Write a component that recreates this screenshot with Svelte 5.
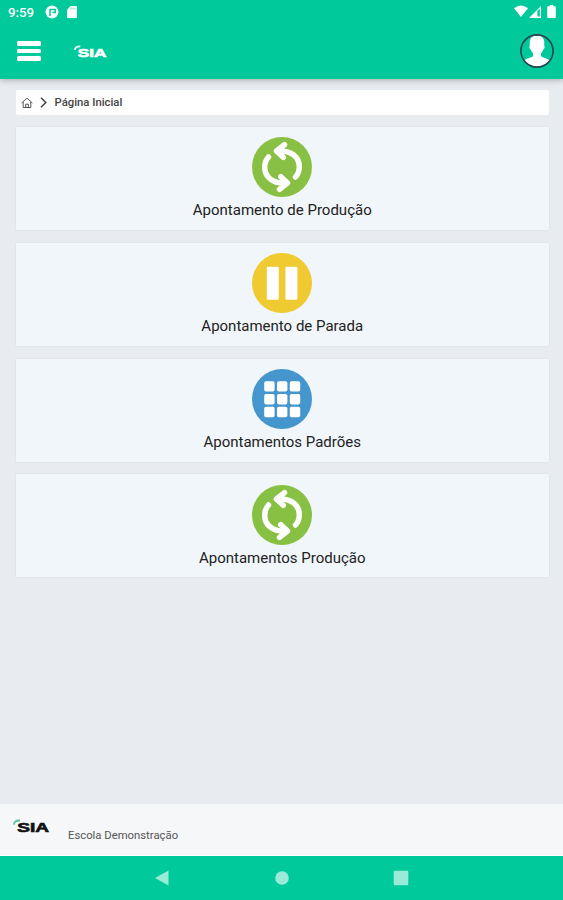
<script lang="ts">
  type IconName = "refresh" | "pause" | "grid";

  interface MenuItem {
    label: string;
    icon: IconName;
    tone: "green" | "yellow" | "blue";
  }

  const items: MenuItem[] = [
    { label: "Apontamento de Produção", icon: "refresh", tone: "green" },
    { label: "Apontamento de Parada", icon: "pause", tone: "yellow" },
    { label: "Apontamentos Padrões", icon: "grid", tone: "blue" },
    { label: "Apontamentos Produção", icon: "refresh", tone: "green" },
  ];

  const cells = [12.2, 25, 37.8];
</script>

{#snippet logo()}
  <svg class="logo-art" viewBox="0 0 36 14" aria-label="SIA">
    <path class="logo-swoosh" d="M1 5.6C.9 2.8 3 1.4 7 1.5" />
    <text x="4.2" y="12.8" textLength="31.8" lengthAdjust="spacingAndGlyphs">SIA</text>
  </svg>
{/snippet}

<div class="screen">
  <div class="status-bar">
    <span class="clock">9:59</span>
    <svg class="status-app" viewBox="0 0 14 14">
      <circle cx="7" cy="7" r="6.5" fill="#fff" />
      <path d="M5 11V4.4h5.200v3.200H7.600" fill="none" stroke="#00c99b" stroke-width="1.5" />
    </svg>
    <svg class="status-sd" viewBox="0 0 10 12">
      <path d="M3.6 0H9a1 1 0 0 1 1 1v10a1 1 0 0 1-1 1H1a1 1 0 0 1-1-1V3.7Z" fill="#fff" />
      <path d="M4 1.7v1.7M6 1.7v1.7M8 1.7v1.7" stroke="#00c99b" stroke-width=".6" />
    </svg>
    <svg class="status-right" viewBox="0 0 44 14">
      <path d="M0 3.2Q7-2.2 14 3.2L7 12Z" fill="#fff" />
      <path d="M15 13 27 1v12Z" fill="#fff" />
      <path d="M23.4 5.8 25.8 3.5v8h-2.4Z" fill="#00c99b" />
      <path d="M35.8 0h3.4v1.3h1.6a1 1 0 0 1 1 1V12a1 1 0 0 1-1 1h-6.6a1 1 0 0 1-1-1V2.3a1 1 0 0 1 1-1h1.6Z" fill="#fff" />
    </svg>
  </div>

  <header class="app-bar">
    <button class="menu-btn" type="button" aria-label="Menu">
      <span></span>
      <span></span>
      <span></span>
    </button>
    <div class="logo logo-light">{@render logo()}</div>
    <button class="avatar" type="button" aria-label="Perfil">
      <svg viewBox="0 0 36 36">
        <clipPath id="avatar-clip"><circle cx="18" cy="18" r="15.6" /></clipPath>
        <path
          clip-path="url(#avatar-clip)"
          d="M18 2.5c4.8 0 7.3 2.7 7.3 7.2 0 1-.1 1.9-.2 2.8 1 .4.6 3.6-1 4.2-.4 1.6-1.2 2.7-2.1 3.5v2.9c1.4 2 9 2.8 11.5 6.4V36H2.5v-6.5c2.5-3.6 10.100-4.400 11.500-6.400v-2.900c-.9-.8-1.7-1.900-2.100-3.500-1.600-.6-2-3.800-1-4.200-.1-.9-.2-1.800-.2-2.800 0-4.500 2.500-7.200 7.300-7.200Z"
          fill="#fff"
        />
        <circle cx="18" cy="18" r="16.1" fill="none" stroke="#294453" stroke-width="1.6" />
      </svg>
    </button>
  </header>

  <main>
    <nav class="breadcrumb">
      <svg class="home" viewBox="0 0 12 12">
        <path d="M.6 6 6 1.2 11.4 6M2.2 5v5.5h7.6V5M4.7 10.5V7.2h2.6v3.3" />
      </svg>
      <svg class="chevron" viewBox="0 0 7 11">
        <path d="M1 .8 5.8 5.5 1 10.2" />
      </svg>
      <span>Página Inicial</span>
    </nav>

    <div class="cards">
      {#each items as item}
        <button class="card" type="button">
          <svg class={`badge ${item.tone}`} viewBox="0 0 60 60">
            <circle cx="30" cy="30" r="30" />
            {#if item.icon === "refresh"}
              <g class="arrows">
                <path d="M32.5 7.7 24.5 14 31.2 20.3M26 14C39 13 47.5 20 47.3 30Q47.2 36 43.5 40" />
                <path d="M27.5 52.3 35.5 46 28.8 39.7M34 46C21 47 12.5 40 12.7 30Q12.8 24 16.5 20" />
              </g>
            {:else if item.icon === "pause"}
              <rect x="14.8" y="13.8" width="12" height="33" rx="1" />
              <rect x="33.4" y="13.8" width="12" height="33" rx="1" />
            {:else}
              {#each cells as y}
                {#each cells as x}
                  <rect {x} {y} width="10.4" height="10.4" rx="1.8" />
                {/each}
              {/each}
            {/if}
          </svg>
          <span>{item.label}</span>
        </button>
      {/each}
    </div>
  </main>

  <footer>
    <div class="logo logo-dark">{@render logo()}</div>
    <span>Escola Demonstração</span>
  </footer>

  <div class="system-nav">
    <svg viewBox="0 0 16 16"><path d="M1 8 14.5 .5v15Z" /></svg>
    <svg viewBox="0 0 16 16"><circle cx="8" cy="8" r="6.8" /></svg>
    <svg viewBox="0 0 16 16"><rect x=".7" y=".7" width="14.6" height="14.6" rx="1" /></svg>
  </div>
</div>

<style>
  :global(body) {
    margin: 0;
  }

  .screen {
    display: flex;
    flex-direction: column;
    height: 900px;
    overflow: hidden;
    background: #e8ecf0;
    font-family: Roboto, sans-serif;
    color: #222;
  }

  button {
    border: 0;
    padding: 0;
    background: transparent;
    font: inherit;
    color: inherit;
  }

  svg {
    display: block;
  }

  .status-bar {
    box-sizing: border-box;
    flex: none;
    height: 24px;
    padding: 0 7px 0 8px;
    display: flex;
    align-items: center;
    background: #00c99b;
    color: #fff;
    position: relative;
    z-index: 2;
  }

  .clock {
    width: 36.5px;
    font-size: 13.3px;
    font-weight: 500;
  }

  .status-app {
    width: 14px;
    height: 14px;
  }

  .status-sd {
    width: 10px;
    height: 12px;
    margin-left: 8px;
  }

  .status-right {
    width: 44px;
    height: 14px;
    margin-left: auto;
    margin-right: -2px;
  }

  .app-bar {
    box-sizing: border-box;
    flex: none;
    height: 55px;
    padding: 0 8px 1px 17px;
    display: flex;
    align-items: center;
    background: #00c99b;
    box-shadow: 0 1px 6px rgba(0, 0, 0, 0.3);
    z-index: 1;
  }

  .menu-btn {
    width: 24px;
    display: grid;
    gap: 3px;
  }

  .menu-btn span {
    height: 4.5px;
    border-radius: 1.5px;
    background: #fff;
  }

  .logo-art {
    width: 100%;
    overflow: visible;
  }

  .logo-art text {
    font-family: "Liberation Sans", sans-serif;
    font-size: 12.5px;
    font-weight: 700;
    fill: currentColor;
    stroke: currentColor;
    stroke-width: 0.6;
  }

  .logo-swoosh {
    fill: none;
    stroke: currentColor;
    stroke-width: 1.8;
  }

  .logo-light {
    width: 32.5px;
    margin-left: 33px;
    color: #fff;
  }

  .logo-dark {
    width: 36px;
    color: #111;
  }

  .logo-dark .logo-swoosh {
    stroke: #5dbd9f;
  }

  .avatar {
    width: 36px;
    height: 36px;
    margin-left: auto;
  }

  main {
    flex: 1;
    padding: 11px 14px 0 15.5px;
  }

  .breadcrumb {
    height: 25px;
    padding-left: 5px;
    display: flex;
    align-items: center;
    background: #fff;
    border-radius: 2px;
    font-size: 11.3px;
    font-weight: 500;
    color: #444;
  }

  .breadcrumb svg {
    fill: none;
    stroke: #444;
  }

  .home {
    width: 12px;
    height: 12px;
    stroke-width: 0.9;
  }

  .chevron {
    width: 7px;
    height: 11px;
    margin: 0 7.5px;
    stroke-width: 1.5;
  }

  .cards {
    display: grid;
    gap: 12.8px;
    margin-top: 12px;
  }

  .card {
    box-sizing: border-box;
    height: 103px;
    padding-top: 10.4px;
    display: flex;
    flex-direction: column;
    align-items: center;
    gap: 4px;
    background: #f1f6fa;
    box-shadow: 0 0 1px rgba(0, 0, 0, 0.15);
    font-size: 15px;
    line-height: 18px;
  }

  .badge {
    width: 60px;
    height: 60px;
    margin-right: 1px;
    fill: #fff;
  }

  .green circle {
    fill: #87c043;
  }

  .yellow circle {
    fill: #efca30;
  }

  .blue circle {
    fill: #4596cd;
  }

  .arrows {
    fill: none;
    stroke: #fff;
    stroke-width: 5.5;
    stroke-linecap: round;
    stroke-linejoin: round;
  }

  footer {
    box-sizing: border-box;
    flex: none;
    height: 52px;
    padding: 15px 13px 0;
    display: flex;
    align-items: flex-start;
    gap: 19px;
    background: #f5f7f9;
    border-bottom: 1px solid #fff;
    font-size: 11.3px;
    color: #555;
  }

  footer span {
    margin-top: 10px;
    line-height: 13px;
  }

  .system-nav {
    flex: none;
    height: 44px;
    display: flex;
    justify-content: center;
    align-items: center;
    gap: 103.7px;
    background: #00c99b;
  }

  .system-nav svg {
    width: 16px;
    height: 16px;
    fill: #99ebd7;
  }
</style>
